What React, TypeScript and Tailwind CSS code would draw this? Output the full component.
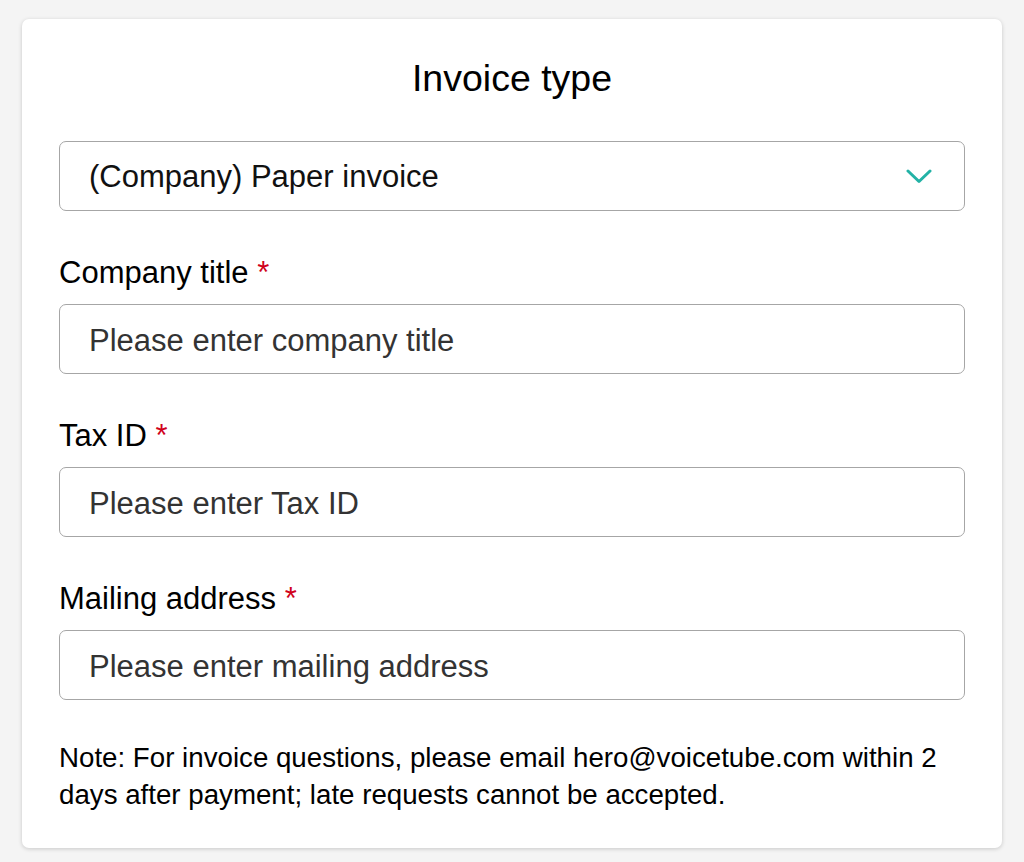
export default function App() {
  const fields = [
    { label: 'Company title', placeholder: 'Please enter company title' },
    { label: 'Tax ID', placeholder: 'Please enter Tax ID' },
    { label: 'Mailing address', placeholder: 'Please enter mailing address' },
  ];

  return (
    <div
      className="min-h-[862px] bg-[#f4f4f4] pt-[19px] px-[22px]"
      style={{ fontFamily: '"Liberation Sans", Arial, sans-serif' }}
    >
      <div className="bg-white rounded-[7px] shadow-[0_1px_4px_rgba(0,0,0,0.18)] px-[37px] pt-[37px] pb-[35px]">
        <h1 className="text-center text-[37.5px] leading-[44px] text-black">Invoice type</h1>

        {/* Select */}
        <div className="mt-[41px] h-[70px] flex items-center justify-between border border-[#a6a6a6] rounded-[7px] pl-[29px] pr-[32px]">
          <span className="mt-[3px] text-[31px] text-[#111]">(Company) Paper invoice</span>
          <svg width="26" height="15" viewBox="0 0 26 15" fill="none">
            <path d="M2 2 L13 12.5 L24 2" stroke="#23b2a6" strokeWidth="3" strokeLinecap="round" strokeLinejoin="round" />
          </svg>
        </div>

        {fields.map((f) => (
          <div key={f.label} className="mt-[44px]">
            <label className="block text-[31px] leading-[36px] text-black">
              {f.label} <span className="text-[#d0021b]">*</span>
            </label>
            <input
              type="text"
              placeholder={f.placeholder}
              className="mt-[13px] w-full h-[70px] border border-[#a6a6a6] rounded-[7px] px-[29px] pt-[4px] text-[31px] text-[#111] placeholder:text-[#333] outline-none"
            />
          </div>
        ))}

        <p className="mt-[39px] text-[27.7px] leading-[37px] text-black">
          Note: For invoice questions, please email hero@voicetube.com within 2 days after payment; late requests cannot be accepted.
        </p>
      </div>
    </div>
  );
}
